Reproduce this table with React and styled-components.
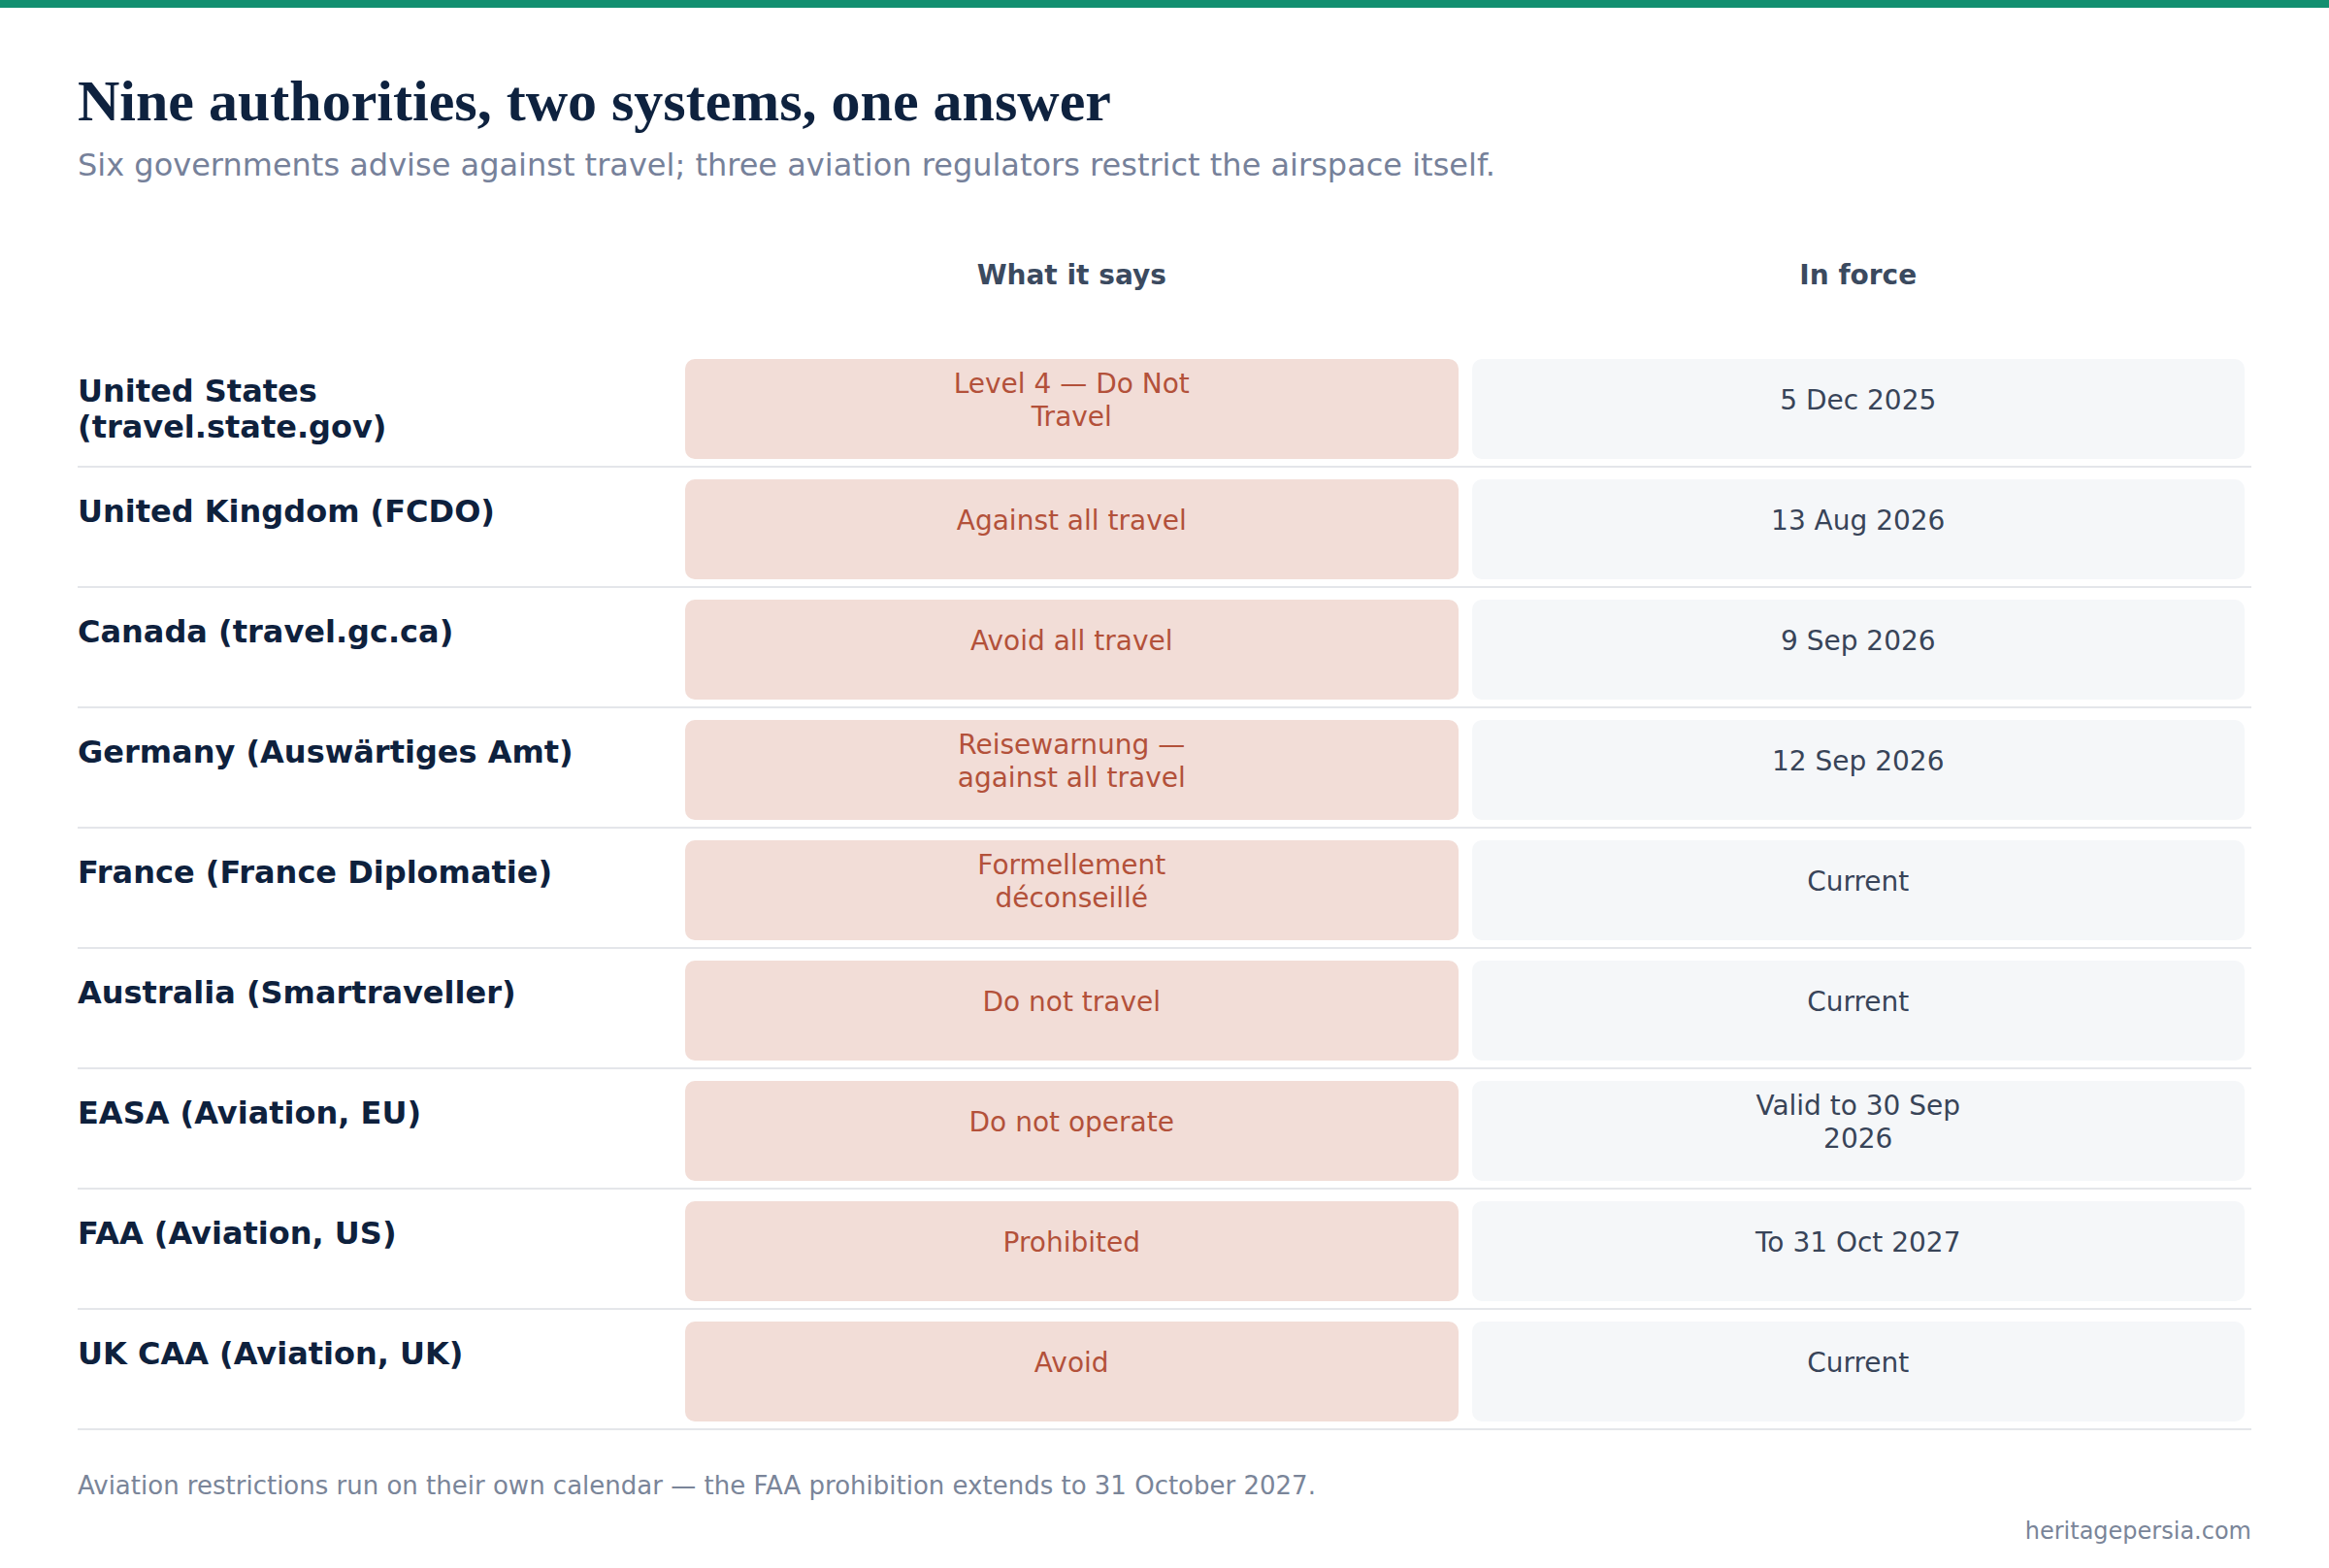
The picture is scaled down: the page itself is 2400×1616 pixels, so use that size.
import React from "react";
import styled, { createGlobalStyle } from "styled-components";

const Global = createGlobalStyle`
  html, body { margin: 0; padding: 0; background: #ffffff; }
  body { font-family: "DejaVu Sans", "Noto Sans", sans-serif; }
`;

const TopBar = styled.div`
  height: 8px;
  background: #128f70;
`;

const Page = styled.main`
  padding: 60px 80px 20px;
  width: 2240px;
`;

const Title = styled.h1`
  margin: 0;
  font-family: "Liberation Serif", "Times New Roman", serif;
  font-weight: 700;
  font-size: 60px;
  line-height: 72px;
  color: #0e223f;
`;

const Subtitle = styled.p`
  margin: 11px 0 0;
  font-size: 32px;
  line-height: normal;
  color: #76819a;
`;

const Table = styled.div`
  margin-top: 78px;
  display: flex;
  flex-direction: column;
`;

const Row = styled.div`
  display: grid;
  grid-template-columns: 619px 1fr 1fr;
  padding: ${(p) => (p.$header ? "0 0 58px" : "12px 0 7px")};
  border-bottom: ${(p) => (p.$header ? "none" : "2px solid #e4e6ea")};
`;

const HeadCell = styled.div`
  text-align: center;
  font-weight: 700;
  font-size: 28px;
  line-height: normal;
  color: #3b4a5f;
`;

const NameCell = styled.div`
  padding: 15px 70px 0 0;
  font-weight: 700;
  font-size: 32px;
  line-height: 37.4px;
  color: #0e213d;
`;

const Cell = styled.div`
  padding: 0 7px;
`;

const Pill = styled.div`
  box-sizing: border-box;
  height: 103px;
  padding: 4px 0 22px;
  border-radius: 10px;
  display: flex;
  align-items: center;
  justify-content: center;
  background: ${(p) => (p.$tone === "alert" ? "#f2ddd7" : "#f5f7f9")};
  color: ${(p) => (p.$tone === "alert" ? "#b3513a" : "#384458")};
`;

const PillText = styled.span`
  max-width: 270px;
  text-align: center;
  font-size: 28px;
  line-height: 33.6px;
`;

const Note = styled.p`
  margin: 42px 0 0;
  font-size: 26px;
  line-height: normal;
  color: #7a8599;
`;

const Source = styled.p`
  margin: 18px 0 0;
  text-align: right;
  font-size: 24px;
  line-height: normal;
  color: #7a8599;
`;

const rows = [
  ["United States (travel.state.gov)", "Level 4 — Do Not Travel", "5 Dec 2025"],
  ["United Kingdom (FCDO)", "Against all travel", "13 Aug 2026"],
  ["Canada (travel.gc.ca)", "Avoid all travel", "9 Sep 2026"],
  ["Germany (Auswärtiges Amt)", "Reisewarnung — against all travel", "12 Sep 2026"],
  ["France (France Diplomatie)", "Formellement déconseillé", "Current"],
  ["Australia (Smartraveller)", "Do not travel", "Current"],
  ["EASA (Aviation, EU)", "Do not operate", "Valid to 30 Sep 2026"],
  ["FAA (Aviation, US)", "Prohibited", "To 31 Oct 2027"],
  ["UK CAA (Aviation, UK)", "Avoid", "Current"],
];

export default function App() {
  return (
    <>
      <Global />
      <TopBar />
      <Page>
        <Title>Nine authorities, two systems, one answer</Title>
        <Subtitle>
          Six governments advise against travel; three aviation regulators restrict the airspace itself.
        </Subtitle>
        <Table>
          <Row $header>
            <div />
            <HeadCell>What it says</HeadCell>
            <HeadCell>In force</HeadCell>
          </Row>
          {rows.map(([name, says, force]) => (
            <Row key={name}>
              <NameCell>{name}</NameCell>
              <Cell>
                <Pill $tone="alert">
                  <PillText>{says}</PillText>
                </Pill>
              </Cell>
              <Cell>
                <Pill $tone="neutral">
                  <PillText>{force}</PillText>
                </Pill>
              </Cell>
            </Row>
          ))}
        </Table>
        <Note>
          Aviation restrictions run on their own calendar — the FAA prohibition extends to 31 October 2027.
        </Note>
        <Source>heritagepersia.com</Source>
      </Page>
    </>
  );
}
